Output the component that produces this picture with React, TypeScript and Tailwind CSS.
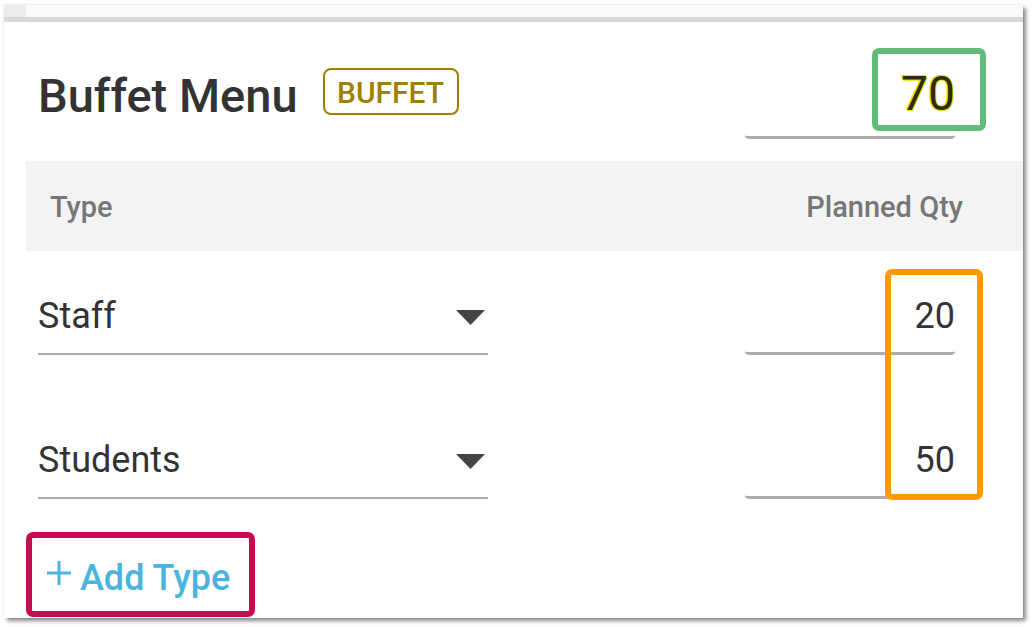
import React from "react";

const font = "font-['Roboto','Liberation_Sans',sans-serif]";

function Caret() {
  return (
    <svg width="29" height="15" viewBox="0 0 29 15" className="mt-[19px] mr-[3px] shrink-0">
      <path d="M0 0h29L14.5 15z" fill="#444" />
    </svg>
  );
}

function TypeRow({ label, qty, first }: { label: string; qty: number; first?: boolean }) {
  return (
    <div className={`flex items-start justify-between pl-[12px] pr-[68px] ${first ? "mt-[40px]" : "mt-[80px]"}`}>
      <div className="flex h-[64px] w-[450px] items-start justify-between border-b-2 border-[#a9a9a9]">
        <span className="pt-[7px] text-[36px] leading-[36px] text-[#333]">{label}</span>
        <Caret />
      </div>
      <div className="h-[64px] w-[210px] rounded-b-[4px] border-b-[3px] border-[#adadad] pt-[7px] text-right text-[36px] leading-[36px] text-[#333]">
        {qty}
      </div>
    </div>
  );
}

export default function App() {
  const rows = [
    { label: "Staff", qty: 20 },
    { label: "Students", qty: 50 },
  ];
  const total = rows.reduce((s, r) => s + r.qty, 0);

  return (
    <div className={`relative h-[627px] w-[1032px] overflow-hidden bg-white ${font}`}>
      <div className="ml-[4px] mt-[5px] flex h-[613px] w-[1019px] flex-col bg-white shadow-[3px_3px_4px_rgba(0,0,0,0.45),0_0_2px_rgba(0,0,0,0.12)]">
        {/* top strip */}
        <div className="flex h-[12px] shrink-0">
          <div className="w-[22px] bg-[#ececec]" />
          <div className="flex-1 bg-[#fbfbfb]" />
        </div>
        <div className="h-[5px] shrink-0 bg-[#d8dada]" />

        <div className="flex flex-1 flex-col pl-[22px]">
          {/* title row */}
          <div className="flex h-[139px] shrink-0 items-start pl-[12px] pr-[68px]">
            <h1 className="mt-[50px] text-[47px] font-medium leading-[47px] text-[#333]">Buffet Menu</h1>
            <span className="ml-[25px] mt-[46px] flex h-[47px] w-[136px] items-center justify-center rounded-[8px] border-2 border-[#9d8100] pt-[2px] text-[30px] font-medium leading-[30px] text-[#9d8100]">
              BUFFET
            </span>
            <div className="ml-auto mt-[40px] h-[77px] w-[210px] rounded-b-[4px] border-b-[3px] border-[#adadad] pt-[8px] text-right">
              <span className="text-[48px] leading-[48px] text-[#2e2c00] [text-shadow:1px_0_0_#e8e400,-1px_0_0_#e8e400,0_1px_0_#e8e400,0_-1px_0_#e8e400,1px_1px_0_#e8e400,-1px_-1px_0_#e8e400]">
                {total}
              </span>
            </div>
          </div>

          {/* table header */}
          <div className="flex h-[90px] shrink-0 items-center justify-between bg-[#f2f4f3] pl-[24px] pr-[60px] pt-[2px] text-[29px] font-medium leading-[29px] text-[#777]">
            <span>Type</span>
            <span>Planned Qty</span>
          </div>

          {rows.map((r, i) => (
            <TypeRow key={r.label} label={r.label} qty={r.qty} first={i === 0} />
          ))}

          <button type="button" className="mt-[61px] flex items-start self-start pl-[21px] text-[#4bb4de]">
            <svg width="24" height="24" viewBox="0 0 24 24" className="mt-[1px]">
              <path d="M12 0v24M0 12h24" stroke="#4bb4de" strokeWidth="3" />
            </svg>
            <span className="ml-[9px] text-[36px] font-medium leading-[36px]">Add Type</span>
          </button>
        </div>
      </div>

      {/* annotation boxes */}
      <div className="pointer-events-none absolute left-[872px] top-[48px] h-[83px] w-[114px] rounded-[7px] border-[6px] border-[#63bb7b]" />
      <div className="pointer-events-none absolute left-[885px] top-[269px] h-[231px] w-[98px] rounded-[7px] border-[6px] border-[#ff9a00]" />
      <div className="pointer-events-none absolute left-[26px] top-[532px] h-[85px] w-[229px] rounded-[7px] border-[6px] border-[#c90a52]" />
    </div>
  );
}
